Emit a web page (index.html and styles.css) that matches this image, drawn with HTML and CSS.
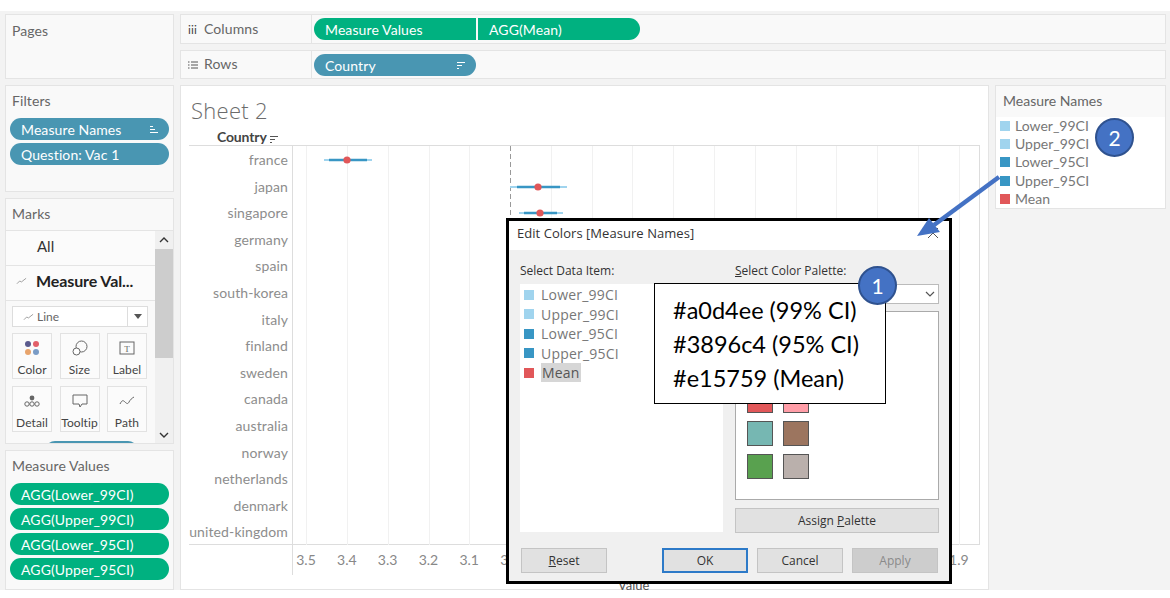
FILE: index.html
```html
<!DOCTYPE html>
<html lang="en">
<head>
<meta charset="utf-8">
<title>Edit Colors</title>
<link rel="stylesheet" href="styles.css">
</head>
<body>
<div class="app">
  <aside class="side">
    <section class="panel pages"><h2 class="panel-title">Pages</h2></section>
    <section class="panel filters">
      <h2 class="panel-title">Filters</h2>
      <div class="pill-stack">
        <div class="pill blue">Measure Names
          <svg class="pill-icon" viewBox="0 0 8 7"><path d="M0 .5h3M0 3.5h5M0 6.500h8" stroke="#fff" fill="none"/></svg>
        </div>
        <div class="pill blue">Question: Vac 1</div>
      </div>
    </section>
    <section class="panel marks">
      <h2 class="panel-title marks-title">Marks</h2>
      <div class="marks-body">
        <div class="marks-main">
          <div class="marks-row"><span class="marks-all">All</span></div>
          <div class="marks-row strong">
            <svg class="mini-line" viewBox="0 0 12 8"><path d="M1 7l3-3 2 1 5-4" stroke="#999" fill="none"/></svg>
            <span>Measure Val...</span>
          </div>
          <div class="marks-controls">
            <div class="mark-type">
              <svg class="mini-line" viewBox="0 0 12 8"><path d="M1 7l3-3 2 1 5-4" stroke="#999" fill="none"/></svg>
              <span class="mark-type-label">Line</span>
              <span class="mark-type-arrow"></span>
            </div>
            <div class="mark-cards">
              <div class="mark-card">
                <svg class="card-icon" viewBox="0 0 16 16"><circle cx="4" cy="4" r="3" fill="#5b5b8e"/><circle cx="12" cy="4" r="3" fill="#e2606a"/><circle cx="4" cy="12" r="3" fill="#e8a46c"/><circle cx="12" cy="12" r="3" fill="#7a9cc6"/></svg>
                <span>Color</span>
              </div>
              <div class="mark-card">
                <svg class="card-icon" viewBox="0 0 16 16"><circle cx="9.500" cy="6.500" r="5.500" fill="none" stroke="#666"/><circle cx="4.500" cy="11.500" r="3.500" fill="#fff" stroke="#666"/></svg>
                <span>Size</span>
              </div>
              <div class="mark-card">
                <svg class="card-icon" viewBox="0 0 16 16"><rect x="1" y="2" width="14" height="12" fill="none" stroke="#666"/><text x="8" y="11.500" class="t-glyph">T</text></svg>
                <span>Label</span>
              </div>
              <div class="mark-card">
                <svg class="card-icon" viewBox="0 0 16 16"><circle cx="8" cy="5" r="2.400" fill="#666"/><circle cx="3" cy="11" r="2.200" fill="none" stroke="#666"/><circle cx="8" cy="11" r="2.200" fill="none" stroke="#666"/><circle cx="13" cy="11" r="2.200" fill="none" stroke="#666"/></svg>
                <span>Detail</span>
              </div>
              <div class="mark-card">
                <svg class="card-icon" viewBox="0 0 16 16"><path d="M1 2h14v9H10l-2 3-1-3H1z" fill="none" stroke="#666"/></svg>
                <span>Tooltip</span>
              </div>
              <div class="mark-card">
                <svg class="card-icon" viewBox="0 0 16 16"><path d="M1 11c2-4 3-4 5-2s3 2 4 0 3-4 5-5" fill="none" stroke="#666"/></svg>
                <span>Path</span>
              </div>
            </div>
            <div class="hidden-pill"></div>
          </div>
        </div>
        <div class="scrollbar">
          <svg class="scroll-arrow" viewBox="0 0 10 6"><path d="M1 5l4-4 4 4" fill="none" stroke="#333" stroke-width="1.400"/></svg>
          <div class="scroll-thumb"></div>
          <div class="scroll-fill"></div>
          <svg class="scroll-arrow" viewBox="0 0 10 6"><path d="M1 1l4 4 4-4" fill="none" stroke="#333" stroke-width="1.400"/></svg>
        </div>
      </div>
    </section>
    <section class="panel values">
      <h2 class="panel-title">Measure Values</h2>
      <div class="pill-stack">
        <div class="pill green">AGG(Lower_99CI)</div>
        <div class="pill green">AGG(Upper_99CI)</div>
        <div class="pill green">AGG(Lower_95CI)</div>
        <div class="pill green">AGG(Upper_95CI)</div>
      </div>
    </section>
  </aside>

  <div class="shelves">
    <div class="shelf">
      <div class="shelf-label"><span class="shelf-glyph">iii</span>Columns</div>
      <div class="shelf-pills">
        <div class="pill green shelf-pill left-half">Measure Values</div>
        <div class="pill green shelf-pill right-half">AGG(Mean)</div>
      </div>
    </div>
    <div class="shelf shelf-rows">
      <div class="shelf-label">
        <svg class="shelf-icon" viewBox="0 0 10 8"><path d="M0 1h1.500M3 1h7M0 4h1.500M3 4h7M0 7h1.500M3 7h7" stroke="#555" fill="none"/></svg>Rows
      </div>
      <div class="shelf-pills">
        <div class="pill blue shelf-pill">Country
          <svg class="pill-icon" viewBox="0 0 8 7"><path d="M0 .5h8M0 3.500h5M0 6.500h2" stroke="#fff" fill="none"/></svg>
        </div>
      </div>
    </div>
  </div>

  <main class="sheet">
    <h1 class="sheet-title">Sheet 2</h1>
    <div class="header-row">
      <span class="col-head">Country</span>
      <svg class="head-sort" viewBox="0 0 8 7"><path d="M0 .5h8M0 3.500h5M0 6.500h2" stroke="#555" fill="none"/></svg>
    </div>
    <div class="chart">
      <div class="labels">
        <span>france</span><span>japan</span><span>singapore</span><span>germany</span><span>spain</span>
        <span>south-korea</span><span>italy</span><span>finland</span><span>sweden</span><span>canada</span>
        <span>australia</span><span>norway</span><span>netherlands</span><span>denmark</span><span>united-kingdom</span>
      </div>
      <svg class="plot" viewBox="0 0 688 399">
        <path d="M.5 0V399M687.500 0V399" stroke="#ddd"/>
        <path d="M14.500 0V399M55.500 0V399M96.500 0V399M137.500 0V399M177.500 0V399M259.500 0V399M300.500 0V399M340.500 0V399M381.500 0V399M422.500 0V399M463.500 0V399M504.500 0V399M544.500 0V399M585.500 0V399M626.500 0V399M667.500 0V399" stroke="#f1f1f1"/>
        <path d="M218.500 0V399" stroke="#999" stroke-dasharray="5 3"/>
        <path d="M32 14H80M218 41H275M227 67H271" stroke="#a0d4ee" stroke-width="2"/>
        <path d="M37 14H75M225 41H268M232 67H265" stroke="#3896c4" stroke-width="2.500"/>
        <g fill="#e15759"><circle cx="55" cy="14" r="3.600"/><circle cx="246" cy="41" r="3.600"/><circle cx="248" cy="67" r="3.600"/></g>
      </svg>
    </div>
    <div class="axis">
      <span class="tick first">3.5</span><span class="tick">3.4</span><span class="tick">3.3</span><span class="tick">3.2</span><span class="tick">3.1</span><span class="tick">3.0</span>
      <span class="tick-gap"></span><span class="tick">1.9</span>
    </div>
    <div class="axis-title">Value</div>
  </main>

  <aside class="legend">
    <h2 class="legend-title">Measure Names</h2>
    <ul class="legend-list">
      <li><i class="sw light"></i>Lower_99CI</li>
      <li><i class="sw light"></i>Upper_99CI</li>
      <li><i class="sw mid"></i>Lower_95CI</li>
      <li><i class="sw mid"></i>Upper_95CI</li>
      <li><i class="sw red"></i>Mean</li>
    </ul>
  </aside>
</div>

<div class="dialog">
  <div class="dialog-head">
    <span>Edit Colors [Measure Names]</span>
    <svg class="close-x" viewBox="0 0 12 12"><path d="M1 1l10 10M11 1L1 11" stroke="#555" fill="none"/></svg>
  </div>
  <div class="dialog-body">
    <div class="dialog-cols">
      <div class="col-items">
        <div class="dlg-label">Select Data Item:</div>
        <ul class="item-list">
          <li><i class="sw light"></i><span>Lower_99CI</span></li>
          <li><i class="sw light"></i><span>Upper_99CI</span></li>
          <li><i class="sw mid"></i><span>Lower_95CI</span></li>
          <li><i class="sw mid"></i><span>Upper_95CI</span></li>
          <li><i class="sw red"></i><span class="selected">Mean</span></li>
        </ul>
      </div>
      <div class="col-palette">
        <div class="dlg-label"><u>S</u>elect Color Palette:</div>
        <div class="combo">
          <svg class="combo-arrow" viewBox="0 0 10 6"><path d="M1 1l4 4 4-4" fill="none" stroke="#555" stroke-width="1.200"/></svg>
        </div>
        <div class="palette">
          <div class="swatches">
            <i class="chip s1"></i><i class="chip s2"></i>
            <i class="chip s3"></i><i class="chip s4"></i>
            <i class="chip s5"></i><i class="chip s6"></i>
          </div>
        </div>
        <div class="btn assign"><span>Assign <u>P</u>alette</span></div>
      </div>
    </div>
    <div class="dialog-actions">
      <div class="btn action"><span><u>R</u>eset</span></div>
      <div class="action-group">
        <div class="btn action ok">OK</div>
        <div class="btn action">Cancel</div>
        <div class="btn action disabled">Apply</div>
      </div>
    </div>
  </div>
</div>

<div class="callout">
  <div>#a0d4ee (99% CI)</div>
  <div>#3896c4 (95% CI)</div>
  <div>#e15759 (Mean)</div>
</div>
<div class="badge badge-one">1</div>
<div class="badge badge-two">2</div>
<svg class="arrow" viewBox="0 0 100 80"><path d="M83 5L18 53" stroke="#4472c4" stroke-width="4.500" fill="none"/><path d="M1 64L13 46 24 60z" fill="#4472c4"/></svg>
</body>
</html>
```
FILE: styles.css
```css
* { box-sizing: border-box; }
html, body { margin: 0; height: 598px; overflow: hidden; background: #fff; }
body { font-family: "Lato", "Open Sans", sans-serif; position: relative; color: #555; }
h1, h2, ul { margin: 0; padding: 0; font-weight: normal; list-style: none; }

.app {
  margin-top: 11px;
  height: 579px;
  background: #f3f3f3;
  padding: 3px 5px 0;
  display: grid;
  grid-template-columns: 169px 809px 171px;
  grid-template-rows: 65px 505px;
  column-gap: 6px;
  row-gap: 6px;
}

.side { grid-row: 1 / 3; display: flex; flex-direction: column; gap: 6px; height: 576px; }
.panel { background: #f9f9f9; border: 1px solid #e4e4e4; padding: 6px 6px 0 6px; }
.panel-title { font-size: 14px; line-height: 17px; color: #666; padding-left: 0; letter-spacing: .1px; }
.pages { height: 65px; padding-top: 7px; }
.filters { height: 107px; padding-left: 4px; padding-right: 4px; }
.filters .panel-title { padding-left: 2px; }
.marks { height: 246px; padding: 0; overflow: hidden; }
.marks-title { height: 32px; padding: 6px 0 0 6px; border-bottom: 1px solid #e4e4e4; }
.values { flex: 1; padding-left: 4px; padding-right: 4px; }
.values .panel-title { padding-left: 2px; }

.pill-stack { display: flex; flex-direction: column; gap: 3px; margin-top: 9px; }
.pill {
  height: 22px; border-radius: 11px; color: #fff; font-size: 14px; line-height: 21px; letter-spacing: .1px;
  padding: 0 11px; display: flex; justify-content: space-between; align-items: center; white-space: nowrap;
}
.blue { background: #4996b2; }
.green { background: #00b180; }
.pill-icon { width: 8px; height: 7px; }

.marks-body { display: flex; height: 213px; }
.marks-main { flex: 1; min-width: 0; }
.marks-row { height: 35px; border-bottom: 1px solid #e4e4e4; display: flex; align-items: center; font-size: 15px; color: #333; padding: 0 0 4px 10px; background: #fbfbfb; }
.marks-all { padding-left: 21px; }
.strong { font-weight: 700; color: #222; gap: 9px; font-size: 16px; letter-spacing: -.1px; padding-bottom: 5px; }
.mini-line { width: 11px; height: 8px; flex: none; }
.marks-controls { padding: 5px 7px 0 6px; position: relative; height: 143px; }
.mark-type { height: 21px; border: 1px solid #ddd; background: #fff; display: flex; align-items: center; padding-left: 10px; font-size: 12px; color: #666; gap: 3px; }
.mark-type-label { flex: 1; }
.mark-type-arrow { width: 20px; height: 100%; border-left: 1px solid #ddd; position: relative; }
.mark-type-arrow::after { content: ""; position: absolute; left: 6px; top: 7px; border: 4px solid transparent; border-top: 5px solid #555; }
.mark-cards { display: grid; grid-template-columns: repeat(3, 40px); column-gap: 7.500px; row-gap: 7px; margin-top: 6px; }
.mark-card { height: 46px; border: 1px solid #e2e2e2; background: #fbfbfb; display: flex; flex-direction: column; align-items: center; font-size: 12px; color: #444; padding-top: 6px; gap: 7px; line-height: 14px; letter-spacing: .1px; }
.card-icon { width: 16px; height: 16px; flex: none; }
.t-glyph { font-family: "Liberation Serif", serif; font-size: 9px; text-anchor: middle; fill: #666; }
.hidden-pill { position: absolute; left: 39px; bottom: -17px; width: 93px; height: 20px; border-radius: 10px; background: #4996b2; }
.scrollbar { width: 18px; background: #f0f0f0; display: flex; flex-direction: column; }
.scroll-arrow { width: 10px; height: 6px; margin: 6px 4px; flex: none; }
.scroll-thumb { height: 109px; background: #cdcdcd; }
.scroll-fill { flex: 1; }

.shelves { grid-column: 2 / 4; display: flex; flex-direction: column; gap: 6px; }
.shelf { height: 30px; display: flex; background: #f9f9f9; border: 1px solid #e4e4e4; }
.shelf-rows { height: 29px; }
.shelf-label { width: 131px; flex: none; border-right: 1px solid #e4e4e4; font-size: 14px; line-height: 17px; color: #666; padding: 5px 0 0 7px; letter-spacing: .1px; }
.shelf-rows .shelf-label { padding-top: 4px; }
.shelf-glyph { display: inline-block; width: 16px; font-size: 12px; color: #444; }
.shelf-icon { width: 10px; height: 8px; margin-right: 6px; }
.shelf-pills { display: flex; gap: 2px; padding: 3px 0 0 2px; }
.shelf-pill { width: 162px; height: 22px; }
.left-half { border-radius: 11px 0 0 11px; }
.right-half { border-radius: 0 11px 11px 0; }

.sheet { background: #fff; border: 1px solid #e4e4e4; padding: 0 8px; position: relative; min-height: 0; }
.sheet-title { font-size: 22px; line-height: 28px; color: #6b6b6b; padding: 10px 0 0 2px; font-family: "Open Sans", sans-serif; font-weight: 300; letter-spacing: .3px; }
.header-row { height: 22px; border-bottom: 1px solid #ddd; display: flex; align-items: flex-end; gap: 3px; padding: 0 0 0 28px; }
.col-head { font-size: 14px; line-height: 16px; font-weight: 700; color: #444; letter-spacing: -.15px; }
.head-sort { width: 8px; height: 7px; margin-bottom: 2px; }
.chart { display: flex; height: 399px; border-bottom: 1px solid #ddd; }
.labels { width: 99px; display: flex; flex-direction: column; align-items: flex-end; padding-top: 1px; font-size: 14px; color: #8d8d8d; letter-spacing: .12px; flex: none; }
.labels span { height: 26.600px; line-height: 26.600px; white-space: nowrap; }
.plot { width: 688px; height: 399px; display: block; margin-left: 4px; flex: none; }
.axis { display: flex; margin-left: 103px; padding-top: 6px; height: 30px; border-left: 1px solid #ddd; width: 688px; font-size: 14px; color: #888; }
.tick { width: 40.800px; text-align: center; flex: none; }
.first { margin-left: -7.400px; }
.tick-gap { width: 408px; flex: none; }
.axis-title { position: absolute; left: 437px; top: 491px; font-size: 13px; color: #555; }

.legend { height: 124px; background: #fff; border: 1px solid #e4e4e4; }
.legend-title { height: 31px; background: #f9f9f9; font-size: 14px; color: #666; padding: 6px 0 0 7px; }
.legend-list { font-size: 14px; color: #777; }
.legend-list li { height: 18.200px; line-height: 18.200px; display: flex; align-items: center; gap: 5px; padding-left: 4px; }
.sw { width: 10px; height: 10px; display: block; flex: none; }
.light { background: #a0d4ee; }
.mid { background: #3896c4; }
.red { background: #e15759; }

.dialog { position: absolute; left: 506px; top: 218px; width: 446px; height: 366px; border: 3px solid #000; background: #f0f0f0; font-family: "Open Sans", sans-serif; font-size: 12px; color: #333; display: flex; flex-direction: column; }
.dialog-head { height: 29px; background: #fff; display: flex; align-items: center; justify-content: space-between; padding: 0 10px 6px 8px; font-size: 13px; flex: none; letter-spacing: .05px; }
.close-x { width: 12px; height: 12px; }
.dialog-body { flex: 1; padding: 12px 10px 0 11px; display: flex; flex-direction: column; }
.dialog-cols { display: flex; gap: 12px; height: 269px; }
.col-items { width: 203px; }
.col-palette { width: 204px; }
.dlg-label { height: 22px; line-height: 17px; }
.item-list { background: #fff; height: 248px; padding: 1px 0 0 4px; color: #777; font-size: 14px; letter-spacing: .2px; }
.item-list li { height: 19.500px; display: flex; align-items: center; gap: 7px; }
.selected { background: #d6d6d6; color: #555; padding: 0 1px; }
.combo { height: 20px; background: #fff; border: 1px solid #bbb; position: relative; }
.combo-arrow { position: absolute; right: 3px; top: 6px; width: 10px; height: 6px; }
.palette { height: 189px; margin-top: 7px; background: #fff; border: 1px solid #aaa; position: relative; }
.swatches { position: absolute; left: 11px; bottom: 20px; display: grid; grid-template-columns: 26px 26px; column-gap: 10px; row-gap: 8px; }
.chip { height: 25px; display: block; border: 1px solid #555; }
.s1 { background: #e15759; }
.s2 { background: #ff9da7; }
.s3 { background: #76b7b2; }
.s4 { background: #9c755f; }
.s5 { background: #59a14f; }
.s6 { background: #bab0ac; }
.btn { background: #e1e1e1; border: 1px solid #c4c4c4; display: flex; align-items: center; justify-content: center; color: #333; }
.assign { height: 25px; margin-top: 8px; }
.dialog-actions { display: flex; justify-content: space-between; margin: 17px 0 0 1px; padding-right: 1px; }
.action-group { display: flex; gap: 9px; }
.action { width: 86px; height: 25px; }
.ok { border: 2px solid #2d7ac8; }
.disabled { background: #cdcdcd; color: #8a8a8a; }

.callout { position: absolute; left: 654px; top: 283px; width: 232px; height: 121px; background: #fff; border: 1px solid #000; padding: 9px 0 0 18px; font-family: "Lato", sans-serif; font-size: 23.500px; line-height: 34px; color: #000; }
.badge { position: absolute; width: 39px; height: 39px; border-radius: 50%; background: #4472c4; border: 2px solid #2f528f; color: #fff; font-family: "Lato", sans-serif; font-size: 21px; display: flex; align-items: center; justify-content: center; }
.badge-one { left: 858px; top: 266px; }
.badge-two { left: 1095px; top: 118px; }
.arrow { position: absolute; left: 916px; top: 172px; width: 100px; height: 80px; }
```
